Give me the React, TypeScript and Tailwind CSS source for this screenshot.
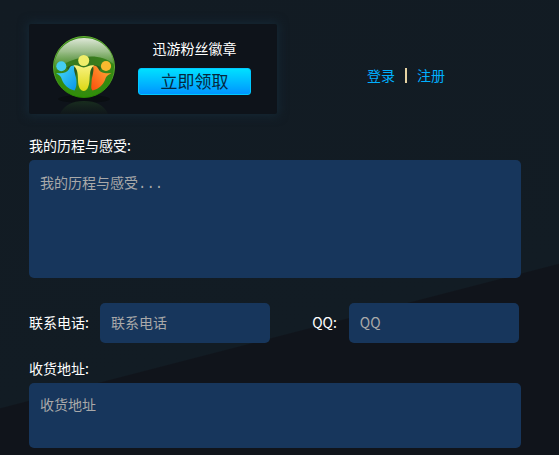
import React, { useState } from "react";

const fieldClass =
  "block rounded-[5px] bg-[#17365c] px-[11px] text-sm text-white placeholder:text-[#a9a9a9] outline-none focus:ring-1 focus:ring-[#00b0ff]";

/**
 * Glossy green fan badge with three figures and a faint reflection.
 */
function BadgeLogo() {
  return (
    <svg className="w-16 h-[78px]" viewBox="0 0 64 78" aria-hidden="true">
      <defs>
        <radialGradient id="ball" cx="0.5" cy="0.4" r="0.62">
          <stop offset="0" stopColor="#37741f" />
          <stop offset="0.65" stopColor="#3a851b" />
          <stop offset="1" stopColor="#2e9004" />
        </radialGradient>
        <linearGradient id="gloss" x1="0" y1="0" x2="0" y2="1">
          <stop offset="0" stopColor="#dfe8d9" />
          <stop offset="0.4" stopColor="#b4cda6" stopOpacity="0.8" />
          <stop offset="1" stopColor="#6fa753" stopOpacity="0.1" />
        </linearGradient>
        <linearGradient id="rim" x1="0" y1="0" x2="0" y2="1">
          <stop offset="0" stopColor="#5fae30" />
          <stop offset="0.5" stopColor="#5fa636" />
          <stop offset="1" stopColor="#278400" />
        </linearGradient>
        <linearGradient id="blue" x1="0" y1="0" x2="1" y2="1">
          <stop offset="0" stopColor="#4ddcf5" />
          <stop offset="1" stopColor="#0795ec" />
        </linearGradient>
        <linearGradient id="yellow" x1="0" y1="0" x2="0" y2="1">
          <stop offset="0" stopColor="#f8f280" />
          <stop offset="1" stopColor="#dcd713" />
        </linearGradient>
        <linearGradient id="orange" x1="1" y1="0" x2="0" y2="1">
          <stop offset="0" stopColor="#ffb23a" />
          <stop offset="1" stopColor="#fb4d0c" />
        </linearGradient>
        <linearGradient id="reflection" x1="0" y1="0" x2="0" y2="1">
          <stop offset="0" stopColor="#1b3320" stopOpacity="0.85" />
          <stop offset="1" stopColor="#15231c" stopOpacity="0.25" />
        </linearGradient>
      </defs>
      <ellipse cx="32" cy="63" rx="26" ry="4" fill="#0a0e12" />
      <path d="M8 78C12 69 20 65 32 65s20 4 24 13z" fill="url(#reflection)" />
      <circle cx="32" cy="31" r="30.5" fill="url(#ball)" stroke="url(#rim)" />
      <path
        d="M2.500 30C3 14 16 2 32 2s29 11 29.500 26C51 19 36 19 24 23 14 26 7 31 2.500 36z"
        fill="url(#gloss)"
      />
      {/* Dark arcs behind the shoulders */}
      <path
        d="M15 32C18 28 24 28 25 34L23 46ZM49 32C46 28 39 28 38 34L41 46Z"
        fill="#2b5a1c"
      />
      <circle cx="9.300" cy="30.300" r="5" fill="#45cdf1" />
      <path
        d="M4 37C10 38 15 37 17 33C18 30 20 29 23 29.500C20 33 24.500 39 24.500 46C24.500 50 24 52 22.500 54.500C16 53 12 49 10 44C9 40 7 39 4 37Z"
        fill="url(#blue)"
      />
      <circle cx="54" cy="30" r="5.100" fill="#f9b92f" />
      <path
        d="M59.500 37C54 38 48 37 46.500 33C45 30 43 29 40.500 29.500C43 33 40 39 39.500 46C39.500 50 38.500 52 40.500 54.500C47 53 51 49 53 44C54 40 56 39 59.500 37Z"
        fill="url(#orange)"
      />
      <circle cx="31.700" cy="24.500" r="5.500" fill="#f0ed69" />
      <path
        d="M21.500 29.500C26 28.500 28 31.500 31.700 31.500S38 28.500 42 29.500C38 33 38 36 37.500 44C37 51 35 55 31.700 55S26 51 26 44C26 36 25 33 21.500 29.500Z"
        fill="url(#yellow)"
      />
    </svg>
  );
}

export default function App() {
  const [story, setStory] = useState("");
  const [phone, setPhone] = useState("");
  const [qq, setQq] = useState("");
  const [address, setAddress] = useState("");

  return (
    <main className="min-h-screen bg-[linear-gradient(165.5deg,#121b23_0%,#121c24_68%,#10141b_68.2%,#10141b_100%)] pt-6 pb-[7px] pl-[29px] pr-[38px] text-sm text-white font-['Noto_Sans_CJK_SC',sans-serif]">
      <header className="flex items-center">
        {/* Badge card */}
        <section className="flex w-[248px] h-[90px] shrink-0 rounded-xs bg-[#0e131a] pt-3 pl-[23px] shadow-[0_0_10px_2px_#152734]">
          <BadgeLogo />
          <div className="ml-[22px] w-[113px] pt-0.5 text-center">
            <h1 className="text-sm leading-5">迅游粉丝徽章</h1>
            <button
              type="button"
              className="mt-2.5 block w-full h-[27px] rounded-[3px] border border-[#00c8ff] bg-linear-to-b from-[#00e0ff] to-[#0094ff] pb-0.5 text-[17px] leading-6 text-[#05283d] cursor-pointer"
            >
              立即领取
            </button>
          </div>
        </section>

        <nav className="flex flex-1 items-center justify-center gap-2.5 pt-3 pl-3.5 leading-5 text-[#00b0ff]">
          <a href="#login">登录</a>
          <span className="w-0.5 h-[15px] bg-[#e6d3a3]"></span>
          <a href="#register">注册</a>
        </nav>
      </header>

      <form className="mt-[21px]" onSubmit={(e) => e.preventDefault()}>
        <label htmlFor="story" className="block leading-5">
          我的历程与感受:
        </label>
        <textarea
          id="story"
          value={story}
          onChange={(e) => setStory(e.target.value)}
          placeholder="我的历程与感受..."
          className={`${fieldClass} mt-[5px] w-full h-[118px] resize-none py-3.5 leading-5 font-['Liberation_Mono','Noto_Sans_CJK_SC',monospace]`}
        />

        <div className="mt-[25px] flex items-center pr-0.5">
          <label htmlFor="phone" className="pb-0.5">
            联系电话:
          </label>
          <input
            id="phone"
            type="tel"
            value={phone}
            onChange={(e) => setPhone(e.target.value)}
            placeholder="联系电话"
            className={`${fieldClass} ml-[11px] h-10 min-w-0 flex-1 pb-0.5`}
          />
          <label htmlFor="qq" className="ml-[42px] pb-0.5">
            QQ:
          </label>
          <input
            id="qq"
            type="text"
            value={qq}
            onChange={(e) => setQq(e.target.value)}
            placeholder="QQ"
            className={`${fieldClass} ml-3 h-10 min-w-0 flex-1 pb-0.5`}
          />
        </div>

        <label htmlFor="address" className="mt-[15px] block leading-5">
          收货地址:
        </label>
        <textarea
          id="address"
          value={address}
          onChange={(e) => setAddress(e.target.value)}
          placeholder="收货地址"
          className={`${fieldClass} mt-[5px] w-full h-[65px] resize-none py-[11px] leading-5`}
        />
      </form>
    </main>
  );
}
